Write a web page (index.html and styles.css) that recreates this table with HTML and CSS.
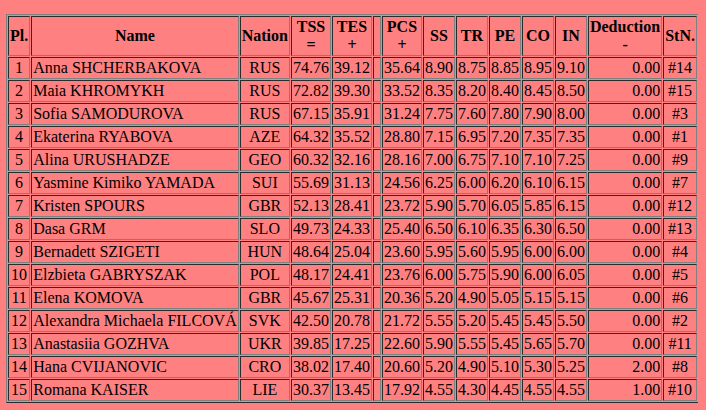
FILE: index.html
```html
<!DOCTYPE html>
<html>
<head>
<meta charset="utf-8">
<link rel="stylesheet" href="styles.css">
</head>
<body>
<table class="results">
<tr><th>Pl.</th><th>Name</th><th>Nation</th><th>TSS<br>=</th><th>TES<br>+</th><th class="gap"></th><th>PCS<br>+</th><th>SS</th><th>TR</th><th>PE</th><th>CO</th><th>IN</th><th class="ded">Deduction<br>-</th><th>StN.</th></tr>
<tr><td class="c">1</td><td>Anna SHCHERBAKOVA</td><td class="c">RUS</td><td class="r">74.76</td><td class="r">39.12</td><td></td><td class="r">35.64</td><td class="r">8.90</td><td class="r">8.75</td><td class="r">8.85</td><td class="r">8.95</td><td class="r">9.10</td><td class="r">0.00</td><td class="c">#14</td></tr>
<tr><td class="c">2</td><td>Maia KHROMYKH</td><td class="c">RUS</td><td class="r">72.82</td><td class="r">39.30</td><td></td><td class="r">33.52</td><td class="r">8.35</td><td class="r">8.20</td><td class="r">8.40</td><td class="r">8.45</td><td class="r">8.50</td><td class="r">0.00</td><td class="c">#15</td></tr>
<tr><td class="c">3</td><td>Sofia SAMODUROVA</td><td class="c">RUS</td><td class="r">67.15</td><td class="r">35.91</td><td></td><td class="r">31.24</td><td class="r">7.75</td><td class="r">7.60</td><td class="r">7.80</td><td class="r">7.90</td><td class="r">8.00</td><td class="r">0.00</td><td class="c">#3</td></tr>
<tr><td class="c">4</td><td>Ekaterina RYABOVA</td><td class="c">AZE</td><td class="r">64.32</td><td class="r">35.52</td><td></td><td class="r">28.80</td><td class="r">7.15</td><td class="r">6.95</td><td class="r">7.20</td><td class="r">7.35</td><td class="r">7.35</td><td class="r">0.00</td><td class="c">#1</td></tr>
<tr><td class="c">5</td><td>Alina URUSHADZE</td><td class="c">GEO</td><td class="r">60.32</td><td class="r">32.16</td><td></td><td class="r">28.16</td><td class="r">7.00</td><td class="r">6.75</td><td class="r">7.10</td><td class="r">7.10</td><td class="r">7.25</td><td class="r">0.00</td><td class="c">#9</td></tr>
<tr><td class="c">6</td><td>Yasmine Kimiko YAMADA</td><td class="c">SUI</td><td class="r">55.69</td><td class="r">31.13</td><td></td><td class="r">24.56</td><td class="r">6.25</td><td class="r">6.00</td><td class="r">6.20</td><td class="r">6.10</td><td class="r">6.15</td><td class="r">0.00</td><td class="c">#7</td></tr>
<tr><td class="c">7</td><td>Kristen SPOURS</td><td class="c">GBR</td><td class="r">52.13</td><td class="r">28.41</td><td></td><td class="r">23.72</td><td class="r">5.90</td><td class="r">5.70</td><td class="r">6.05</td><td class="r">5.85</td><td class="r">6.15</td><td class="r">0.00</td><td class="c">#12</td></tr>
<tr><td class="c">8</td><td>Dasa GRM</td><td class="c">SLO</td><td class="r">49.73</td><td class="r">24.33</td><td></td><td class="r">25.40</td><td class="r">6.50</td><td class="r">6.10</td><td class="r">6.35</td><td class="r">6.30</td><td class="r">6.50</td><td class="r">0.00</td><td class="c">#13</td></tr>
<tr><td class="c">9</td><td>Bernadett SZIGETI</td><td class="c">HUN</td><td class="r">48.64</td><td class="r">25.04</td><td></td><td class="r">23.60</td><td class="r">5.95</td><td class="r">5.60</td><td class="r">5.95</td><td class="r">6.00</td><td class="r">6.00</td><td class="r">0.00</td><td class="c">#4</td></tr>
<tr><td class="c">10</td><td>Elzbieta GABRYSZAK</td><td class="c">POL</td><td class="r">48.17</td><td class="r">24.41</td><td></td><td class="r">23.76</td><td class="r">6.00</td><td class="r">5.75</td><td class="r">5.90</td><td class="r">6.00</td><td class="r">6.05</td><td class="r">0.00</td><td class="c">#5</td></tr>
<tr><td class="c">11</td><td>Elena KOMOVA</td><td class="c">GBR</td><td class="r">45.67</td><td class="r">25.31</td><td></td><td class="r">20.36</td><td class="r">5.20</td><td class="r">4.90</td><td class="r">5.05</td><td class="r">5.15</td><td class="r">5.15</td><td class="r">0.00</td><td class="c">#6</td></tr>
<tr><td class="c">12</td><td>Alexandra Michaela FILCOVÁ</td><td class="c">SVK</td><td class="r">42.50</td><td class="r">20.78</td><td></td><td class="r">21.72</td><td class="r">5.55</td><td class="r">5.20</td><td class="r">5.45</td><td class="r">5.45</td><td class="r">5.50</td><td class="r">0.00</td><td class="c">#2</td></tr>
<tr><td class="c">13</td><td>Anastasiia GOZHVA</td><td class="c">UKR</td><td class="r">39.85</td><td class="r">17.25</td><td></td><td class="r">22.60</td><td class="r">5.90</td><td class="r">5.55</td><td class="r">5.45</td><td class="r">5.65</td><td class="r">5.70</td><td class="r">0.00</td><td class="c">#11</td></tr>
<tr><td class="c">14</td><td>Hana CVIJANOVIC</td><td class="c">CRO</td><td class="r">38.02</td><td class="r">17.40</td><td></td><td class="r">20.60</td><td class="r">5.20</td><td class="r">4.90</td><td class="r">5.10</td><td class="r">5.30</td><td class="r">5.25</td><td class="r">2.00</td><td class="c">#8</td></tr>
<tr><td class="c">15</td><td>Romana KAISER</td><td class="c">LIE</td><td class="r">30.37</td><td class="r">13.45</td><td></td><td class="r">17.92</td><td class="r">4.55</td><td class="r">4.30</td><td class="r">4.45</td><td class="r">4.55</td><td class="r">4.55</td><td class="r">1.00</td><td class="c">#10</td></tr>
</table>
</body>
</html>
```

FILE: styles.css
```css
html, body {
  background: #ff8080;
}
body {
  margin: 14px 8px 8px 6px;
  font-family: "Liberation Serif", "Times New Roman", serif;
  font-size: 16px;
  line-height: 18px;
  color: #000;
}
.results {
  border: 1px outset #808080;
  border-spacing: 1px;
  border-collapse: separate;
}
.results th,
.results td {
  border: 1px inset #808080;
  padding: 1px;
  white-space: nowrap;
}
.results th {
  font-weight: bold;
  text-align: center;
  vertical-align: middle;
}
.results th.ded {
  vertical-align: top;
}
.results th.gap {
  padding: 1px 3px;
}
.results td.c {
  text-align: center;
}
.results td.r {
  text-align: right;
}
```
